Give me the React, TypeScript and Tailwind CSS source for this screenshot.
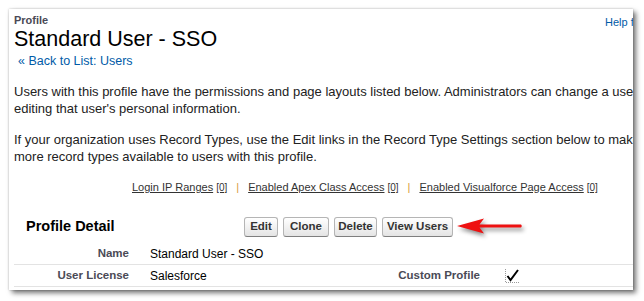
import React from "react";

const buttons = [
  { label: "Edit", w: "w-[34px]" },
  { label: "Clone", w: "w-[46px]" },
  { label: "Delete", w: "w-[43px]" },
  { label: "View Users", w: "w-[71px]" },
];

const links = ["Login IP Ranges", "Enabled Apex Class Access", "Enabled Visualforce Page Access"];

function CheckIcon() {
  return (
    <svg width="15" height="15" viewBox="0 0 15 15">
      <path d="M0.5 1 V14.5 H14" fill="none" stroke="#9a9a9a" strokeWidth="1" strokeDasharray="1 1" />
      <path d="M2.5 8 L5.5 12 L13 2" fill="none" stroke="#000" strokeWidth="2" />
    </svg>
  );
}

function RedArrow() {
  return (
    <svg
      className="absolute left-[446px] top-[205px] drop-shadow-[2px_3px_2px_rgba(0,0,0,0.45)]"
      width="76"
      height="26"
      viewBox="0 0 76 26"
    >
      <path
        d="M2 12 L29 4.5 L24.5 10.5 L66 10.5 Q67.5 12 66 13.5 L24.5 13.5 L29 19.5 Z"
        fill="#ee1111"
      />
    </svg>
  );
}

export default function App() {
  return (
    <div className="w-[644px] h-[301px] bg-white pt-[9px] pl-[9px] font-['Liberation_Sans',Arial,sans-serif]">
      <div className="relative w-[624px] h-[281px] bg-white overflow-hidden shadow-[3px_3px_5px_rgba(0,0,0,0.55),0_0_2px_rgba(0,0,0,0.25)]">
        {/* Header */}
        <div className="flex">
          <div className="w-[596px] shrink-0 pl-[5px]">
            <div className="pt-[5px] text-[11px] leading-[13px] font-bold text-[#4a4a56]">Profile</div>
            <h1 className="text-[21.5px] leading-[24px] text-black">Standard User - SSO</h1>
          </div>
          <a className="shrink-0 pt-[7px] text-[11px] leading-[13px] text-[#015ba7] whitespace-nowrap">
            Help for this Page
          </a>
        </div>

        <div className="pl-[9px] mt-[2.5px] text-[12.5px] leading-[15px] text-[#015ba7]">« Back to List: Users</div>

        {/* Description */}
        <div className="pl-[5px] text-[13px] leading-[17px] text-[#222] whitespace-nowrap">
          <p className="mt-[14px]">
            Users with this profile have the permissions and page layouts listed below. Administrators can change a user's profile by
            <br />
            editing that user's personal information.
          </p>
          <p className="mt-[14px]">
            If your organization uses Record Types, use the Edit links in the Record Type Settings section below to make one or
            <br />
            more record types available to users with this profile.
          </p>
        </div>

        {/* Related links */}
        <div className="mt-[15.5px] pl-[123px] flex items-baseline text-[11px] leading-[14px] text-[#333] whitespace-nowrap">
          {links.map((l, i) => (
            <React.Fragment key={l}>
              {i > 0 && <span className="mx-[9px] text-[#d89b3a]">|</span>}
              <span className="underline">{l}</span>
              <span className="ml-[3px] text-[10px] underline">[0]</span>
            </React.Fragment>
          ))}
        </div>

        {/* Profile Detail header */}
        <div className="mt-[22px] flex items-center h-[20px]">
          <h2 className="pl-[17px] w-[235px] shrink-0 text-[14.5px] font-bold text-black">Profile Detail</h2>
          <div className="flex gap-[5px]">
            {buttons.map((b) => (
              <button
                key={b.label}
                className={`${b.w} h-[20px] flex items-center justify-center rounded-[3px] border border-[#b5b5b5] border-b-[#7f7f7f] bg-linear-to-b from-white to-[#e4e4e4] text-[11.5px] font-bold text-[#333]`}
              >
                {b.label}
              </button>
            ))}
          </div>
        </div>

        {/* Detail rows */}
        <div className="mt-[6px] ml-[5px]">
          <div className="grid grid-cols-[115px_180px_171px_1fr] items-center h-[22px] border-b border-[#e3e3e3]">
            <div className="text-right text-[11.5px] font-bold text-[#4a4a56]">Name</div>
            <div className="pl-[21px] text-[12px] text-black">Standard User - SSO</div>
            <div />
            <div />
          </div>
          <div className="grid grid-cols-[115px_180px_171px_1fr] items-center h-[22px] border-b border-[#e3e3e3]">
            <div className="text-right text-[11.5px] font-bold text-[#4a4a56]">User License</div>
            <div className="pl-[21px] text-[12px] text-black">Salesforce</div>
            <div className="text-right text-[11.5px] font-bold text-[#4a4a56]">Custom Profile</div>
            <div className="pl-[25px] flex items-center">
              <CheckIcon />
            </div>
          </div>
        </div>

        <RedArrow />
      </div>
    </div>
  );
}
